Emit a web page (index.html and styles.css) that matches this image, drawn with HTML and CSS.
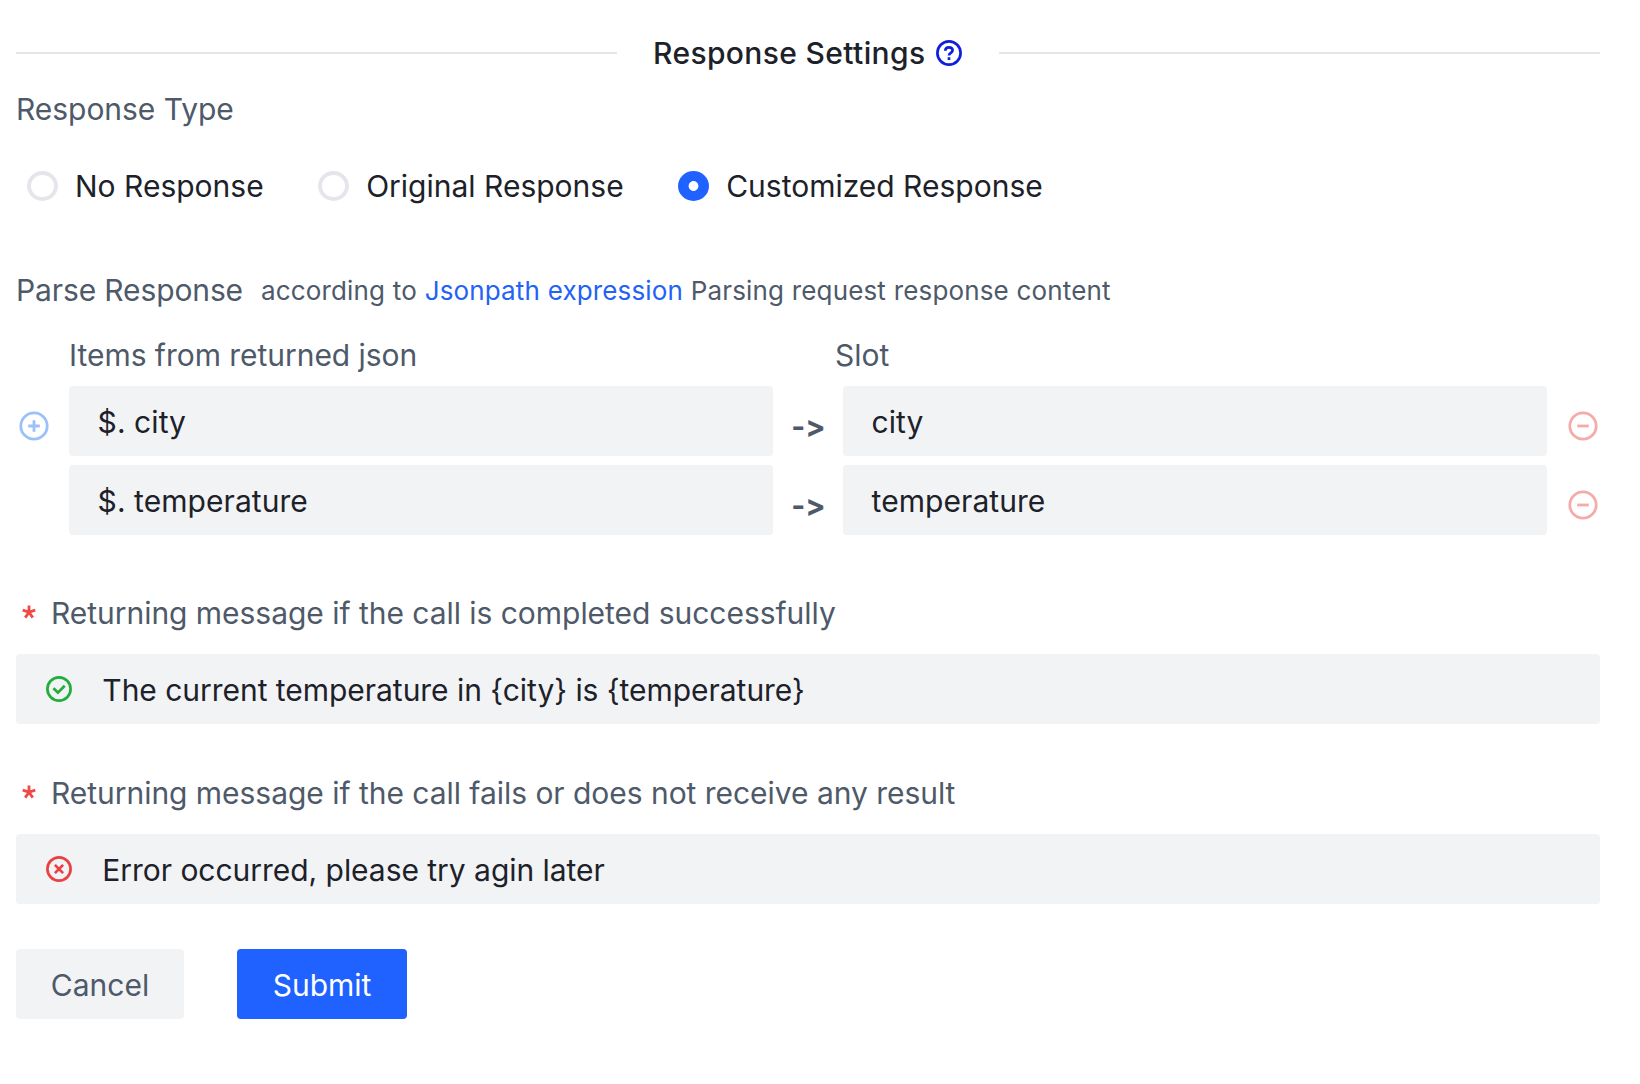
FILE: index.html
```
<!DOCTYPE html>
<html lang="en">
<head>
<meta charset="utf-8">
<title>Response Settings</title>
<link rel="stylesheet" href="styles.css">
</head>
<body>
<main class="form">
  <header class="divider">
    <h1 class="divider-title">Response Settings</h1>
    <svg class="help" width="26" height="26" viewBox="0 0 26 26" fill="none" stroke="currentColor" stroke-width="2.7"><circle cx="13" cy="13" r="11.6"/><path d="M9.3 10.8c0-2.2 1.5-3.5 3.7-3.5s3.6 1.4 3.6 3.2c0 2.4-3.6 2.5-3.6 5"/><path d="M13 17.2v2.8"/></svg>
  </header>

  <div class="label">Response Type</div>
  <div class="radios">
    <div class="radio"><span class="dot"></span>No Response</div>
    <div class="radio"><span class="dot"></span>Original Response</div>
    <div class="radio"><span class="dot dot-on"></span>Customized Response</div>
  </div>

  <div class="parse">
    <span class="parse-label">Parse Response</span>
    <span class="hint">according to <a class="link">Jsonpath expression</a> Parsing request response content</span>
  </div>

  <div class="heads"><span class="head-items">Items from returned json</span><span>Slot</span></div>
  <div class="rows">
    <div class="row">
      <svg class="add" width="30" height="30" viewBox="0 0 30 30" fill="none" stroke="currentColor" stroke-width="2.8"><circle cx="15" cy="15" r="13.2"/><path d="M15 9.2v11.6M9.2 15h11.6"/></svg>
      <div class="input">$. city</div>
      <span class="arrow">-&gt;</span>
      <div class="input">city</div>
      <svg class="remove" width="30" height="30" viewBox="0 0 30 30" fill="none" stroke="currentColor" stroke-width="2.8"><circle cx="15" cy="15" r="13.2"/><path d="M9.2 15h11.6"/></svg>
    </div>
    <div class="row">
      <span></span>
      <div class="input">$. temperature</div>
      <span class="arrow">-&gt;</span>
      <div class="input">temperature</div>
      <svg class="remove" width="30" height="30" viewBox="0 0 30 30" fill="none" stroke="currentColor" stroke-width="2.8"><circle cx="15" cy="15" r="13.2"/><path d="M9.2 15h11.6"/></svg>
    </div>
  </div>

  <div class="required success-label">
    <svg class="star" width="14" height="14" viewBox="0 0 14 14" stroke="currentColor" stroke-width="2.8"><path d="M7 7.2V.6M7 7.2L.7 5.2M7 7.2l6.3-2M7 7.2l-3.8 5.4M7 7.2l3.8 5.4"/></svg>
    <span>Returning message if the call is completed successfully</span>
  </div>
  <div class="message">
    <svg class="ok" width="26" height="26" viewBox="0 0 26 26" fill="none" stroke="currentColor" stroke-width="2.7"><circle cx="13" cy="13" r="11.6"/><path d="M7.4 12.3l4.5 4.3 6.8-6.9"/></svg>
    <span>The current temperature in {city} is {temperature}</span>
  </div>

  <div class="required fail-label">
    <svg class="star" width="14" height="14" viewBox="0 0 14 14" stroke="currentColor" stroke-width="2.8"><path d="M7 7.2V.6M7 7.2L.7 5.2M7 7.2l6.3-2M7 7.2l-3.8 5.4M7 7.2l3.8 5.4"/></svg>
    <span>Returning message if the call fails or does not receive any result</span>
  </div>
  <div class="message">
    <svg class="bad" width="26" height="26" viewBox="0 0 26 26" fill="none" stroke="currentColor" stroke-width="2.7"><circle cx="13" cy="13" r="11.6"/><path d="M8.9 8.9l8.2 8.2M17.1 8.9l-8.2 8.2"/></svg>
    <span>Error occurred, please try agin later</span>
  </div>

  <footer class="actions">
    <button class="btn cancel">Cancel</button>
    <button class="btn submit">Submit</button>
  </footer>
</main>
</body>
</html>
```
FILE: styles.css
```
* { box-sizing: border-box; }
body {
  margin: 0;
  background: #fff;
  color: #1d2129;
  font: 400 30px/40px Inter, "Liberation Sans", sans-serif;
  letter-spacing: -0.035px;
  white-space: nowrap;
}
.form { padding: 33px 40px 0 16px; }
svg { display: block; }

.divider { display: flex; align-items: center; height: 40px; }
.divider::before, .divider::after { content: ""; flex: 1; height: 2px; background: #e5e6eb; }
.divider-title { margin: 0 0 0 36px; font-size: 30px; font-weight: 500; letter-spacing: 0.36px; }
.help { color: #0f1fdc; margin: 0 37px 0 10.5px; }

.label { margin-top: 16px; color: #4e5969; }

.radios { display: flex; margin-top: 37px; padding-left: 11px; gap: 54.5px; letter-spacing: 0; }
.radio { display: flex; align-items: center; gap: 17px; }
.dot { width: 31px; height: 30px; border: 4px solid #e5e6eb; border-radius: 50%; }
.dot-on { border: 0; background: radial-gradient(circle, #fff 4.5px, #2062ff 5.3px); }

.parse { display: flex; gap: 18px; height: 40px; margin-top: 64px; color: #4e5969; }
.parse-label { letter-spacing: -0.12px; }
.hint { padding-top: 1px; font-size: 26px; letter-spacing: 0.14px; word-spacing: 0.3px; }
.link { color: #2362f5; }

.heads { display: grid; grid-template-columns: 766px auto; padding-left: 53px; margin-top: 25px; color: #4e5969; }

.rows { display: grid; gap: 9px; margin-top: 11px; letter-spacing: 0.06px; }
.row { display: grid; grid-template-columns: 53px 704px 70px 704px 53px; height: 70px; }
.input { padding: 16px 28.6px 0; background: #f2f3f5; border-radius: 4px; }
.add { margin: 24.5px 0 0 2.5px; color: #9bc1fb; }
.remove { margin: 24.5px 0 0 20.5px; color: #f5aba8; }
.arrow { padding: 20px 0 0 1px; text-align: center; color: #4e5969; font-weight: 700; font-feature-settings: "calt" 0, "liga" 0; }

.required { display: flex; color: #4e5969; }
.star { margin: 12px 15px 0 6px; color: #f04a48; }
.success-label { margin-top: 58px; }
.fail-label { margin-top: 49px; }
.message { display: flex; gap: 30px; height: 70px; margin-top: 21px; padding: 16px 30.3px 0; background: #f2f3f5; border-radius: 4px; }
.message svg { margin-top: 6px; }
.ok { color: #22ad3c; }
.bad { color: #ea4043; }

.actions { display: flex; gap: 53px; margin-top: 45px; }
.btn { height: 70px; border: 0; border-radius: 4px; padding: 2px 0 0; font: inherit; letter-spacing: 0; }
.cancel { width: 168px; background: #f2f3f5; color: #4e5969; }
.submit { width: 170px; background: #2062ff; color: #fff; }
```
